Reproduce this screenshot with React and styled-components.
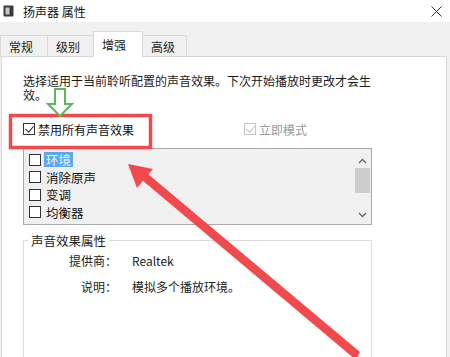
import React from "react";
import styled, { createGlobalStyle } from "styled-components";

const GlobalStyle = createGlobalStyle`
  html, body {
    margin: 0;
    padding: 0;
    background: #f0f0f0;
  }
  body {
    font-family: "Noto Sans CJK SC", "Noto Sans", sans-serif;
    font-size: 12px;
    color: #1a1a1a;
  }
`;

const tabs = [
  { label: "常规", width: 48 },
  { label: "级别", width: 47 },
  { label: "增强", width: 50, active: true },
  { label: "高级", width: 45 },
];

const effects = ["环境", "消除原声", "变调", "均衡器"];

const App = () => {
  return (
    <>
      <GlobalStyle />
      <Window>
        <TitleBar>
          <svg width="11" height="12" viewBox="0 0 11 12">
            <rect x="0.5" y="0.5" width="10" height="11" rx="1" fill="#3a3a3a" />
            <rect x="2.5" y="2.5" width="4" height="7" fill="#c8c8c8" />
          </svg>
          <Title>扬声器 属性</Title>
          <Spacer />
          <svg width="11" height="11" viewBox="0 0 11 11">
            <path d="M0.5 0.5 L10.5 10.5 M10.5 0.5 L0.5 10.5" stroke="#333" strokeWidth="1" />
          </svg>
        </TitleBar>

        <Body>
          <TabRow>
            {tabs.map((t) => (
              <Tab key={t.label} $active={t.active} $width={t.width}>
                {t.label}
              </Tab>
            ))}
          </TabRow>

          <Panel>
            <Desc>选择适用于当前聆听配置的声音效果。下次开始播放时更改才会生效。</Desc>

            <CheckRow>
              <CheckItem>
                <Box $checked />
                禁用所有声音效果
              </CheckItem>
              <CheckItem $disabled>
                <Box $checked $disabled />
                立即模式
              </CheckItem>
            </CheckRow>

            <ListBox>
              <ListItems>
                {effects.map((e, i) => (
                  <ListRow key={e}>
                    <Box />
                    <ItemLabel $selected={i === 0}>{e}</ItemLabel>
                  </ListRow>
                ))}
                <ListRow>
                  <Box />
                </ListRow>
              </ListItems>
              <ScrollBar>
                <svg width="9" height="6" viewBox="0 0 9 6">
                  <path d="M1 5 L4.5 1.5 L8 5" stroke="#606060" strokeWidth="1.3" fill="none" />
                </svg>
                <Thumb />
                <Spacer />
                <svg width="9" height="6" viewBox="0 0 9 6">
                  <path d="M1 1 L4.5 4.5 L8 1" stroke="#606060" strokeWidth="1.3" fill="none" />
                </svg>
              </ScrollBar>
            </ListBox>

            <GroupBox>
              <Legend>声音效果属性</Legend>
              <PropGrid>
                <PropName>提供商：</PropName>
                <PropValue>Realtek</PropValue>
                <PropName>说明：</PropName>
                <PropValue>模拟多个播放环境。</PropValue>
              </PropGrid>
            </GroupBox>
          </Panel>
        </Body>

        {/* annotations drawn over the dialog */}
        <Overlay width="450" height="357" viewBox="0 0 450 357">
          <rect x="10.5" y="115.5" width="140" height="32" fill="none" stroke="#f04a4e" strokeWidth="3.5" />
          <path
            d="M55 89 L65 89 L65 104 L72 104 L60 116 L48 104 L55 104 Z"
            fill="#fff"
            stroke="#5cb85c"
            strokeWidth="2"
            strokeLinejoin="miter"
          />
          <polygon points="128,164 153,169 137,188" fill="#f04a4e" />
          <polygon points="142,180 148,174 360,352 356,360" fill="#f04a4e" />
        </Overlay>
      </Window>
    </>
  );
};

const Window = styled.div`
  position: relative;
  width: 450px;
  height: 357px;
  overflow: hidden;
  display: flex;
  flex-direction: column;
`;

const TitleBar = styled.div`
  height: 22px;
  background: #fff;
  display: flex;
  align-items: center;
  padding: 0 8px 0 3px;
  flex-shrink: 0;
`;

const Title = styled.span`
  margin-left: 9px;
  font-size: 12px;
  color: #111;
`;

const Spacer = styled.div`
  flex: 1;
`;

const Body = styled.div`
  flex: 1;
  display: flex;
  flex-direction: column;
  padding: 10px 3px 0 1px;
  min-height: 0;
`;

const TabRow = styled.div`
  display: flex;
  align-items: flex-end;
  height: 25px;
  margin-bottom: -1px;
  position: relative;
  z-index: 1;
`;

const Tab = styled.div`
  width: ${(p) => p.$width}px;
  height: ${(p) => (p.$active ? 26 : 22)}px;
  box-sizing: border-box;
  padding-left: 8px;
  display: flex;
  align-items: center;
  background: ${(p) => (p.$active ? "#fff" : "#f0f0f0")};
  border: 1px solid #d9d9d9;
  border-bottom: ${(p) => (p.$active ? "none" : "1px solid #d9d9d9")};
  margin-left: -1px;
  color: #222;
`;

const Panel = styled.div`
  flex: 1;
  background: #fff;
  border: 1px solid #d9d9d9;
  border-bottom: none;
  padding: 17px 0 0 21px;
  display: flex;
  flex-direction: column;
  min-height: 0;
`;

const Desc = styled.div`
  width: 350px;
  line-height: 14px;
  color: #1a1a1a;
`;

const CheckRow = styled.div`
  display: flex;
  align-items: center;
  margin-top: 20px;
  height: 14px;
`;

const CheckItem = styled.label`
  display: flex;
  align-items: center;
  gap: 3px;
  font-size: 12px;
  color: ${(p) => (p.$disabled ? "#9a9a9a" : "#111")};
  margin-left: ${(p) => (p.$disabled ? "110px" : "0")};
`;

const Box = styled.span`
  width: 12px;
  height: 12px;
  box-sizing: border-box;
  border: 1px solid ${(p) => (p.$disabled ? "#c4c4c4" : "#333")};
  background: #fff;
  position: relative;
  flex-shrink: 0;
  &::after {
    content: "";
    display: ${(p) => (p.$checked ? "block" : "none")};
    position: absolute;
    left: 3px;
    top: 0px;
    width: 4px;
    height: 7px;
    border: solid ${(p) => (p.$disabled ? "#bdbdbd" : "#222")};
    border-width: 0 1.3px 1.3px 0;
    transform: rotate(40deg);
  }
`;

const ListBox = styled.div`
  margin-top: 12px;
  width: 349px;
  height: 77px;
  flex-shrink: 0;
  box-sizing: border-box;
  border: 1px solid #a8a8a8;
  background: #f0f0f0;
  display: flex;
  overflow: hidden;
`;

const ListItems = styled.div`
  flex: 1;
  padding: 2px 0 0 5px;
`;

const ListRow = styled.div`
  display: flex;
  align-items: center;
  height: 17.5px;
  gap: 3px;
`;

const ItemLabel = styled.span`
  padding: 0 2px;
  line-height: 15px;
  font-size: 12.5px;
  background: ${(p) => (p.$selected ? "#5aa8ee" : "transparent")};
  color: ${(p) => (p.$selected ? "#eef6ff" : "#111")};
`;

const ScrollBar = styled.div`
  width: 17px;
  display: flex;
  flex-direction: column;
  align-items: center;
  padding: 9px 0 6px;
  box-sizing: border-box;
`;

const Thumb = styled.div`
  width: 15px;
  height: 25px;
  margin-top: 4px;
  background: #cdcdcd;
`;

const GroupBox = styled.fieldset`
  margin: 6px 0 0 0;
  width: 349px;
  height: 140px;
  flex-shrink: 0;
  box-sizing: border-box;
  border: 1px solid #dcdcdc;
  padding: 4px 0 0 0;
`;

const Legend = styled.legend`
  margin-left: 4px;
  padding: 0 3px;
  font-size: 12.5px;
  color: #222;
`;

const PropGrid = styled.div`
  display: grid;
  grid-template-columns: 93px 1fr;
  column-gap: 15px;
  row-gap: 12px;
  align-items: center;
  line-height: 14px;
`;

const PropName = styled.span`
  text-align: right;
  color: #222;
`;

const PropValue = styled.span`
  color: #222;
`;

const Overlay = styled.svg`
  position: absolute;
  left: 0;
  top: 0;
  pointer-events: none;
`;

export default App;
